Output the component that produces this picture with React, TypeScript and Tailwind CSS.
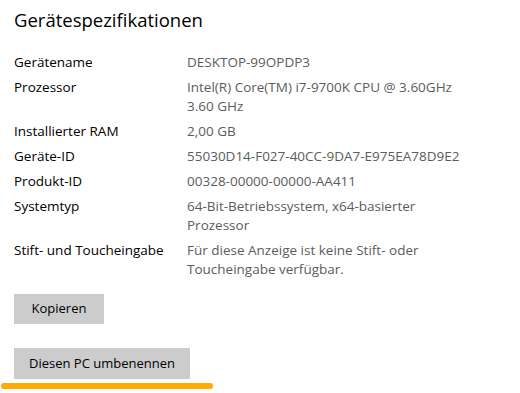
import React from "react";

const rows: [string, string[]][] = [
  ["Gerätename", ["DESKTOP-99OPDP3"]],
  ["Prozessor", ["Intel(R) Core(TM) i7-9700K CPU @ 3.60GHz", "3.60 GHz"]],
  ["Installierter RAM", ["2,00 GB"]],
  ["Geräte-ID", ["55030D14-F027-40CC-9DA7-E975EA78D9E2"]],
  ["Produkt-ID", ["00328-00000-00000-AA411"]],
  ["Systemtyp", ["64-Bit-Betriebssystem, x64-basierter", "Prozessor"]],
  ["Stift- und Toucheingabe", ["Für diese Anzeige ist keine Stift- oder", "Toucheingabe verfügbar."]],
];

export default function App() {
  return (
    <div
      className="w-[520px] h-[393px] bg-white overflow-hidden relative"
      style={{ fontFamily: '"Open Sans", "Noto Sans", sans-serif' }}
    >
      <div className="pl-[14px] pt-[6px]">
        <h1 className="text-[18.5px] leading-[28px] text-black font-normal">
          Gerätespezifikationen
        </h1>
        <div className="mt-[19px] flex flex-col gap-[6px]">
          {rows.map(([label, vals]) => (
            <div key={label} className="flex text-[13.5px] leading-[19px]">
              <div className="w-[173px] shrink-0 text-black">{label}</div>
              <div className="text-[#5c5c5c]">
                {vals.map((v) => (
                  <div key={v}>{v}</div>
                ))}
              </div>
            </div>
          ))}
        </div>
        <div className="mt-[15px] flex flex-col items-start gap-[24px]">
          <button className="w-[90px] h-[30px] bg-[#cccccc] text-[13px] text-black">
            Kopieren
          </button>
          <button className="w-[176px] h-[31px] bg-[#cccccc] text-[13px] text-black">
            Diesen PC umbenennen
          </button>
        </div>
      </div>
      <div className="absolute left-[1px] top-[383px] w-[212px] h-[6px] rounded-full bg-[#ffaa00]" />
    </div>
  );
}
